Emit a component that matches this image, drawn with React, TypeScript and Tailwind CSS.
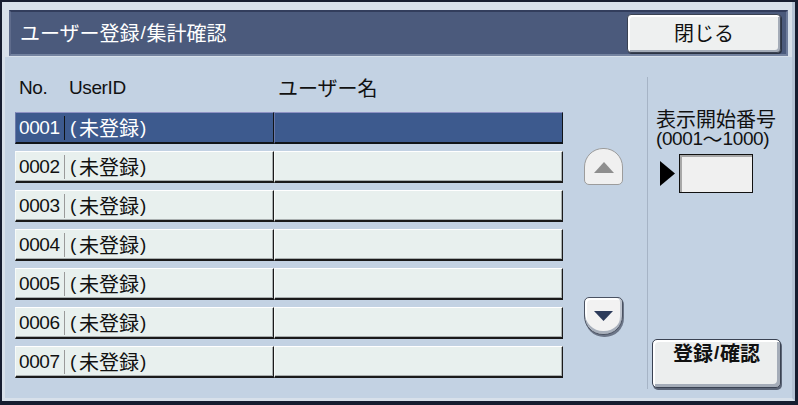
import React from "react";

const MONO = "font-['Liberation_Sans',Arial,sans-serif] text-[19px] leading-[20px] tracking-[-0.4px]";

function T({ s }: { s: string }) {
  const parts = s.split(/([\x20-\x7e]+)/).filter(Boolean);
  return (
    <>
      {parts.map((p, i) =>
        /^[\x20-\x7e]+$/.test(p) ? (
          <span key={i} className={MONO}>
            {p}
          </span>
        ) : (
          <span key={i}>{p}</span>
        )
      )}
    </>
  );
}

function Row({ no, selected }: { no: string; selected?: boolean }) {
  const cell = selected
    ? "bg-[#3d5a8e] text-white border-t border-t-[#8e92c4] border-l border-l-[#6a78a8] border-b-2 border-b-[#101418] border-r border-r-[#101418]"
    : "bg-[#e8f0ee] text-[#111] border-t border-t-[#ffffff] border-l border-l-[#f6faf8] border-b-2 border-b-[#1a1a1a] border-r border-r-[#1a1a1a] shadow-[inset_0_-1px_0_#a8aeae,inset_-1px_0_0_#a8aeae]";
  return (
    <div className="flex h-[32px]">
      <div className={`w-[259px] h-full flex items-center pl-[3px] ${cell}`}>
        <span className={`w-[45px] ${MONO}`}>{no}</span>
        <span className={`w-[1px] h-[24px] ${selected ? "bg-[#101418]" : "bg-[#9a9a9a]"}`} />
        <span className="pl-[5px] flex items-center">
          <span className={MONO}>(</span>
          <span className="ml-[3px]">未登録</span>
          <span className={`ml-[1px] ${MONO}`}>)</span>
        </span>
      </div>
      <div className={`w-[289px] h-full ${cell}`} />
    </div>
  );
}

export default function App() {
  const rows = ["0001", "0002", "0003", "0004", "0005", "0006", "0007"];
  return (
    <div className="w-[798px] h-[405px] bg-[#161d30] pt-[2px] pl-[2px] pr-[3px] pb-[4px] overflow-hidden font-['Noto_Sans_CJK_JP',sans-serif] text-[20px] leading-[20px] text-[#111]">
      <div className="w-full h-full flex flex-col bg-[#c3d2e3] border-l-[3px] border-r-[3px] border-b-[3px] border-l-[#d7e0ea] border-r-[#b4c2d4] border-b-[#d7e0ea]">
        {/* title frame */}
        <div className="bg-[#d7e0ea] pt-[8px] pl-[4px] pr-[4px] pb-[1px]">
          <div className="h-[46px] bg-[#4b5a7c] flex items-center justify-between pl-[9px] pr-[5px] border-t-2 border-l-2 border-t-[#323d5c] border-l-[#5f6c8c] border-b-2 border-r-2 border-b-[#7483a0] border-r-[#6e7d9c]">
            <span className="text-white flex items-center">
              <span>ユーザー登録</span>
              <span className={`${MONO} px-[1px]`}>/</span>
              <span>集計確認</span>
            </span>
            <button className="w-[154px] h-[39px] bg-[#eef0f0] border border-[#3a4252] rounded-[4px] flex items-center justify-center text-[#111] shadow-[inset_2px_2px_0_#ffffff,inset_-2px_-2px_0_#a4acb8,1px_1px_0_#2c3444]">
              閉じる
            </button>
          </div>
        </div>

        {/* content */}
        <div className="flex-1 flex pl-[10px]">
          {/* list */}
          <div className="w-[548px] flex flex-col">
            <div className="h-[55px] pt-[21px] pl-[4px] flex items-start">
              <span className={`w-[50px] ${MONO}`}>No.</span>
              <span className={`w-[209px] ${MONO}`}>UserID</span>
              <span>ユーザー名</span>
            </div>
            <div className="flex flex-col gap-[7px]">
              {rows.map((r, i) => (
                <Row key={r} no={r} selected={i === 0} />
              ))}
            </div>
          </div>

          {/* scroll buttons */}
          <div className="ml-[21px] w-[39px] flex flex-col pt-[91px]">
            <button className="w-[39px] h-[37px] bg-[#f0f0f0] border border-[#9c9c9c] rounded-t-[19px] rounded-b-[5px] flex items-center justify-center pt-[2px]">
              <svg width="20" height="11" viewBox="0 0 20 11">
                <polygon points="10,0 20,11 0,11" fill="#8e8e8e" />
              </svg>
            </button>
            <button className="mt-[112px] w-[39px] h-[38px] bg-[#f2f2f2] border border-[#4a5262] rounded-t-[5px] rounded-b-[19px] flex items-start justify-center pt-[13px] shadow-[inset_0_-3px_0_#a8b0bc,inset_-2px_0_0_#c0c6d0,inset_2px_2px_0_#ffffff,1px_2px_0_#6c7688]">
              <svg width="19" height="10" viewBox="0 0 19 10">
                <polygon points="0,0 19,0 9.5,10" fill="#2c3b5a" />
              </svg>
            </button>
          </div>

          {/* divider */}
          <div className="ml-[24px] mt-[20px] w-[1px] h-[312px] bg-[#a6b4c6]" />

          {/* right panel */}
          <div className="flex-1 flex flex-col pl-[8px] pt-[52px]">
            <div className="h-[20px]">表示開始番号</div>
            <div className="h-[20px] flex items-center">
              <span className={MONO}>(0001</span>
              <span>～</span>
              <span className={MONO}>1000)</span>
            </div>
            <div className="mt-[5px] flex items-center pl-[4px]">
              <svg width="15" height="25" viewBox="0 0 15 25">
                <polygon points="0,0 15,12.5 0,25" fill="#000" />
              </svg>
              <div className="ml-[4px] w-[74px] h-[39px] bg-[#f0f0f0] border border-[#111] shadow-[inset_2px_2px_0_#a8a8a8]" />
            </div>
            <button className="mt-[146px] ml-[-4px] w-[129px] h-[49px] bg-[#eceeee] border border-[#3a4252] rounded-[5px] flex justify-center pt-[3px] font-bold text-[#111] shadow-[inset_2px_2px_0_#ffffff,inset_-3px_-3px_0_#a4acb8,1px_2px_0_#5c6678]">
              <span>登録</span>
              <span className={`${MONO} font-bold px-[1px]`}>/</span>
              <span>確認</span>
            </button>
          </div>
        </div>
      </div>
    </div>
  );
}
